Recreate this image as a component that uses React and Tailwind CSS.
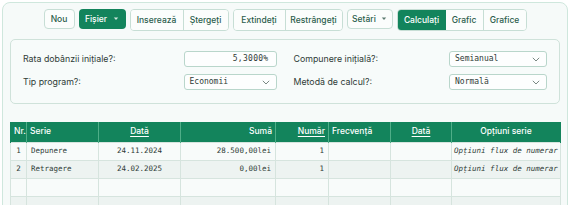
import React from 'react';

const sans = { fontFamily: 'Inter, "Noto Sans", sans-serif' };
const mono = { fontFamily: '"DejaVu Sans Mono", "Liberation Mono", monospace' };

function Caret({ className }) {
  return (
    <svg width="6" height="4" viewBox="0 0 6 4" className={`shrink-0 ${className}`}>
      <path d="M0.8 0.6 L3 3 L5.2 0.6 Z" fill="currentColor" />
    </svg>
  );
}

function Chevron() {
  return (
    <svg width="8" height="5" viewBox="0 0 8 5" className="shrink-0 text-[#6b7a75]">
      <path d="M0.8 0.8 L4 4 L7.2 0.8" fill="none" stroke="currentColor" strokeWidth="0.9" />
    </svg>
  );
}

const btn =
  'h-[20px] flex items-center px-[3px] text-[8.5px] font-medium text-[#2b5e4c] bg-[#fbfdfc] whitespace-nowrap';

function Toolbar() {
  return (
    <div className="flex justify-center gap-[4px]" style={sans}>
      <button className={`${btn} rounded-[4px] border border-[#c7ded5] w-[31px] justify-center`}>Nou</button>
      <button className="h-[20px] w-[47px] flex items-center justify-center gap-[6px] rounded-[4px] bg-[#13845c] text-white text-[8.5px] font-medium">
        Fișier <Caret className="text-white/80" />
      </button>
      <div className="flex rounded-[4px] border border-[#c7ded5] overflow-hidden">
        <button className={`${btn} w-[53px] justify-center border-r border-[#c7ded5]`}>Inserează</button>
        <button className={`${btn} w-[44px] justify-center`}>Ștergeți</button>
      </div>
      <div className="flex rounded-[4px] border border-[#c7ded5] overflow-hidden">
        <button className={`${btn} w-[52px] justify-center border-r border-[#c7ded5]`}>Extindeți</button>
        <button className={`${btn} w-[56px] justify-center`}>Restrângeți</button>
      </div>
      <button className={`${btn} rounded-[4px] border border-[#c7ded5] w-[46px] justify-center gap-[5px]`}>
        Setări <Caret className="text-[#5d7a70]" />
      </button>
      <div className="flex rounded-[4px] border border-[#c7ded5] overflow-hidden">
        <button className="h-[20px] w-[48px] flex items-center justify-center bg-[#13845c] text-white text-[8.5px] font-medium">
          Calculați
        </button>
        <button className={`${btn} w-[38px] justify-center border-r border-[#c7ded5]`}>Grafic</button>
        <button className={`${btn} w-[42px] justify-center`}>Grafice</button>
      </div>
    </div>
  );
}

function Field({ label, children }) {
  return (
    <div className="flex items-center justify-between h-[16px]">
      <span className="text-[8.8px] text-[#2f3b37]" style={sans}>{label}</span>
      {children}
    </div>
  );
}

function Select({ value, w }) {
  return (
    <div
      className={`${w} h-[16px] flex items-center justify-between rounded-[3px] border border-[#b9d6cb] bg-[#fdfefe] pl-[5px] pr-[6px] text-[8px] text-[#2f3b37]`}
      style={mono}
    >
      <span>{value}</span>
      <Chevron />
    </div>
  );
}

function Settings() {
  return (
    <div className="mt-[8px] rounded-[5px] border border-[#cfe2da] bg-[#f7fbfa] px-[12px] pt-[11px] pb-[13px]">
      <div className="grid grid-cols-2 gap-x-[17px] gap-y-[7px]">
        <Field label="Rata dobânzii inițiale?:">
          <div
            className="w-[93px] h-[16px] flex items-center justify-end rounded-[3px] border border-[#b9d6cb] bg-[#fdfefe] pr-[7px] text-[8px] text-[#2f3b37] tracking-[0.3px]"
            style={mono}
          >
            5,3000%
          </div>
        </Field>
        <Field label="Compunere inițială?:">
          <Select value="Semianual" w="w-[98px]" />
        </Field>
        <Field label="Tip program?:">
          <Select value="Economii" w="w-[93px]" />
        </Field>
        <Field label="Metodă de calcul?:">
          <Select value="Normală" w="w-[98px]" />
        </Field>
      </div>
    </div>
  );
}

const cols = [
  { name: 'Nr.', w: 'w-[16px]', align: 'text-left', u: false },
  { name: 'Serie', w: 'w-[72px]', align: 'text-left', u: false },
  { name: 'Dată', w: 'w-[82px]', align: 'text-center', u: true },
  { name: 'Sumă', w: 'w-[95px]', align: 'text-right', u: false },
  { name: 'Număr', w: 'w-[53px]', align: 'text-right', u: true },
  { name: 'Frecvență', w: 'w-[62px]', align: 'text-left', u: false },
  { name: 'Dată', w: 'w-[61px]', align: 'text-center', u: true },
  { name: 'Opțiuni serie', w: 'w-[109px]', align: 'text-center', u: false },
];

const rows = [
  ['1', 'Depunere', '24.11.2024', '28.500,00lei', '1', '', '', 'Opțiuni flux de numerar'],
  ['2', 'Retragere', '24.02.2025', '0,00lei', '1', '', '', 'Opțiuni flux de numerar'],
  ['', '', '', '', '', '', '', ''],
  ['', '', '', '', '', '', '', ''],
];

function Table() {
  return (
    <table className="mt-[18px] w-[550px] table-fixed border-collapse">
      <colgroup>
        {cols.map((c, i) => (
          <col key={i} className={c.w} />
        ))}
      </colgroup>
      <thead>
        <tr className="h-[20px] bg-[#13845c]">
          {cols.map((c, i) => (
            <th
              key={i}
              className={`${c.align} px-[3px] text-[8.5px] font-medium text-white border-x border-[#4fae88] first:border-l-[#13845c] last:border-r-[#13845c] whitespace-nowrap`}
              style={sans}
            >
              <span className={c.u ? 'underline underline-offset-[1.5px]' : ''}>{c.name}</span>
            </th>
          ))}
        </tr>
      </thead>
      <tbody>
        {rows.map((r, ri) => (
          <tr key={ri} className={`h-[18px] ${ri % 2 === 0 ? 'bg-[#f8fbfa]' : 'bg-[#edf3f1]'}`}>
            {r.map((v, ci) => (
              <td
                key={ci}
                className={`border border-[#d6e4de] px-[4px] text-[7.5px] text-[#2f3b37] whitespace-nowrap ${
                  ci === 2 ? 'text-center' : ci === 3 || ci === 4 ? 'text-right' : ci === 0 ? 'text-center' : 'text-left'
                } ${ci === 7 ? 'italic pl-[2px]' : ''}`}
                style={mono}
              >
                {v}
              </td>
            ))}
          </tr>
        ))}
      </tbody>
    </table>
  );
}

export default function App() {
  return (
    <div className="h-[205px] overflow-hidden bg-white pt-[2px] px-[2px]">
      <div className="h-[240px] rounded-[8px] border border-[#cfe7dd] bg-[#f6faf9] px-[7px] pt-[6px]">
        <Toolbar />
        <Settings />
        <Table />
      </div>
    </div>
  );
}
